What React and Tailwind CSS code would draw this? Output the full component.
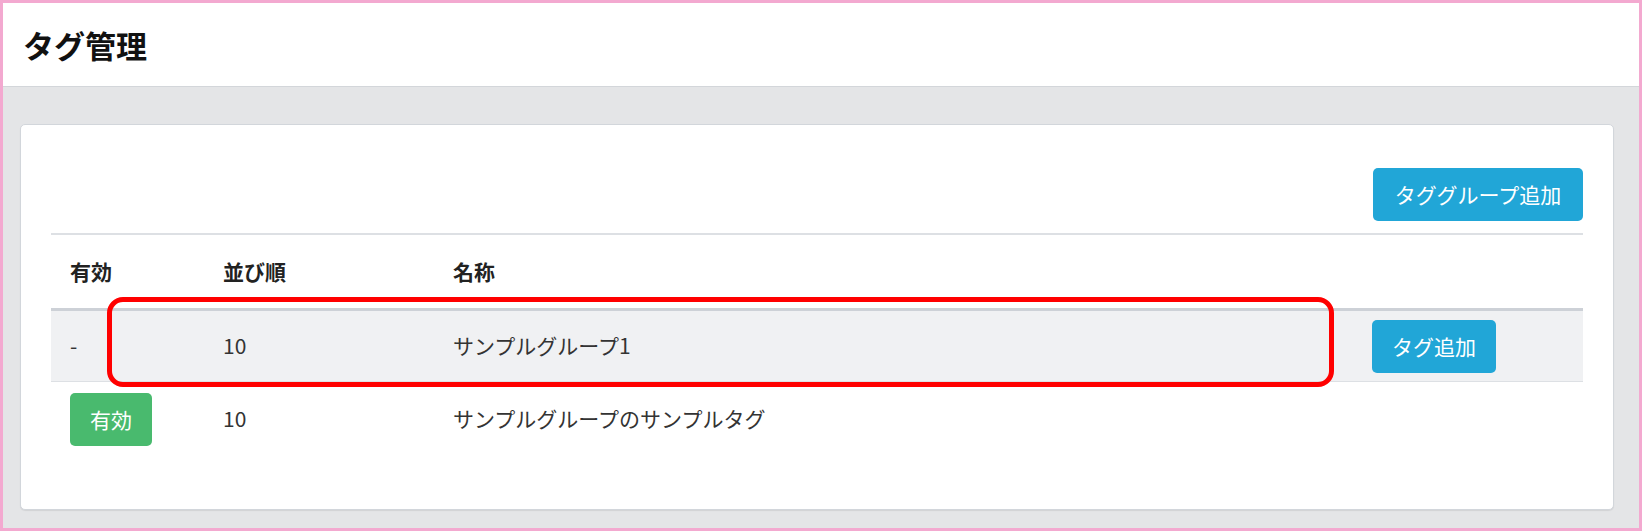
const FONT = "font-['Noto_Sans_CJK_JP','Noto_Sans',sans-serif]"

const rows = [
  { group: true, active: '-', order: 10, name: 'サンプルグループ1' },
  { group: false, active: '有効', order: 10, name: 'サンプルグループのサンプルタグ' },
]

function Btn({ children, className = '' }) {
  return (
    <button
      className={`h-[53px] rounded-[5px] px-[18px] text-[21px] leading-none text-white ${className}`}
    >
      {children}
    </button>
  )
}

export default function App() {
  return (
    <div
      className={`${FONT} relative w-[1642px] h-[531px] overflow-hidden border-[3px] border-[#f3a9d0] bg-[#e4e5e7] text-[#333]`}
    >
      {/* page header */}
      <div className="h-[84px] bg-white border-b border-[#d3d6da] flex items-center pl-[20px]">
        <h1 className="text-[31px] font-bold leading-none text-[#111]">タグ管理</h1>
      </div>

      {/* card */}
      <div className="ml-[17px] mt-[37px] w-[1594px] h-[386px] bg-white border border-[#d2d6db] rounded-[5px] shadow-[0_1px_1px_rgba(0,0,0,0.08)] pt-[43px] px-[30px]">
        <div className="flex justify-end">
          <Btn className="w-[210px] bg-[#21a6d7]">タググループ追加</Btn>
        </div>

        <div className="mt-[12px] border-t-2 border-[#dde0e4]">
          {/* header */}
          <div className="grid grid-cols-[154px_230px_919px_229px] h-[73px] items-center text-[21px] font-bold text-[#222]">
            <div className="pl-[19px]">有効</div>
            <div className="pl-[18px]">並び順</div>
            <div className="pl-[18px]">名称</div>
            <div />
          </div>

          {rows.map((r, i) => (
            <div
              key={i}
              className={`grid grid-cols-[154px_230px_919px_229px] items-center text-[21px] ${
                r.group
                  ? 'h-[74px] bg-[#f0f1f3] border-t-[3px] border-b border-t-[#cdd1d7] border-b-[#dde0e4]'
                  : 'h-[74px]'
              }`}
            >
              <div className="pl-[19px]">
                {r.group ? (
                  <span>{r.active}</span>
                ) : (
                  <Btn className="w-[82px] h-[52px] px-0 bg-[#49ba6e]">{r.active}</Btn>
                )}
              </div>
              <div className="pl-[18px]">{r.order}</div>
              <div className="pl-[18px]">{r.name}</div>
              <div className="pl-[18px]">
                {r.group && <Btn className="w-[124px] bg-[#21a6d7] px-0">タグ追加</Btn>}
              </div>
            </div>
          ))}
        </div>
      </div>

      {/* red highlight annotation */}
      <div className="absolute left-[104px] top-[294px] w-[1227px] h-[90px] border-[5px] border-[#ff0000] rounded-[16px] pointer-events-none" />
    </div>
  )
}
